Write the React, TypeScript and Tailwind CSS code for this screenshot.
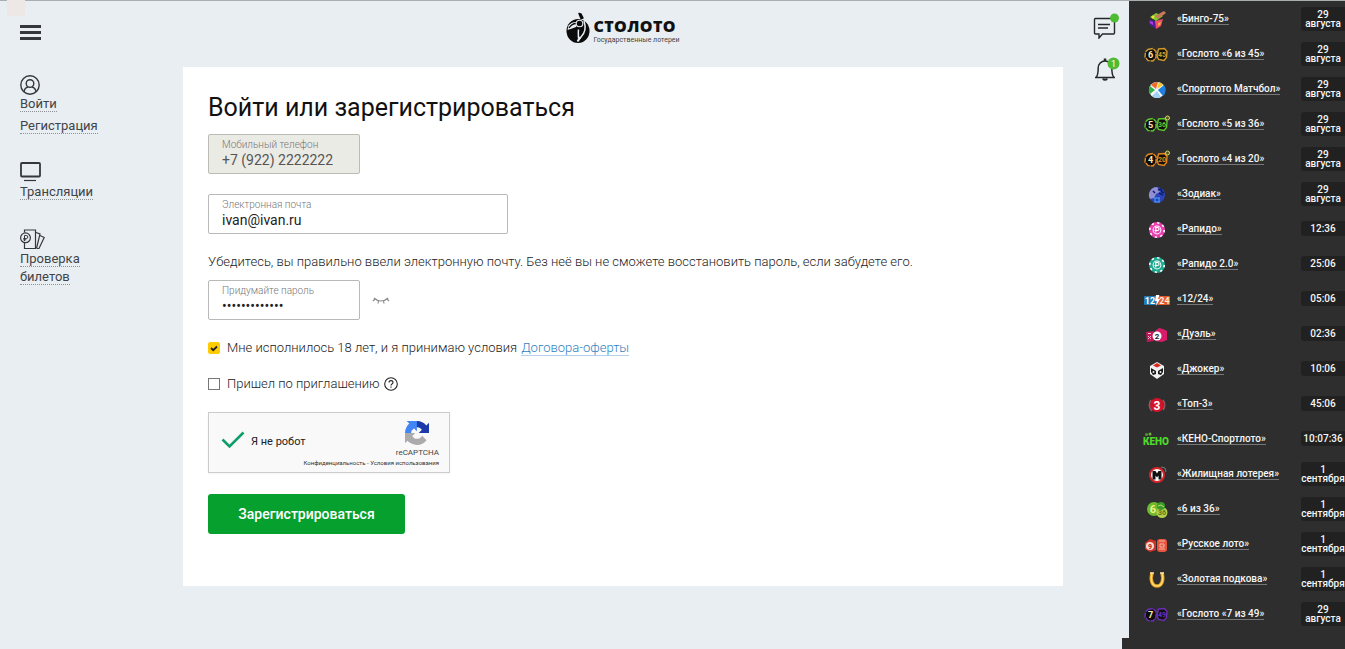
import { useState } from 'react'
import type { ReactNode } from 'react'

interface Game {
  name: string
  when: string[]
  icon: ReactNode
}

// Pair of numbered balls used by the "Гослото" family
function Pair({ a, b, color, plus }: { a: string; b: string; color: string; plus?: boolean }) {
  return (
    <>
      <path d="M5 7.500l5-1 3 3v6l-3 3.500-5-.5-3-3.500.5-5z" fill="#0c0c0c" stroke={color} strokeWidth="1.400" strokeDasharray="5 .8" />
      <path d="M15.500 7l6-.5 2.500 3-.5 6-2.500 3-5.500-1-1.500-4z" fill="#15110a" stroke={color} strokeWidth="1.400" />
      <text x="7.500" y="16" fontSize="9" fontWeight="700" fill="#ffe9a8" textAnchor="middle">{a}</text>
      <text x="19" y="15" fontSize="7" fontWeight="700" fill={color} textAnchor="middle">{b}</text>
      {plus && <circle cx="24.500" cy="6" r="2" fill="#55551c" stroke="#d9d978" />}
    </>
  )
}

function Chip({ color }: { color: string }) {
  return (
    <>
      <circle cx="14" cy="13" r="8" fill={color} />
      <circle cx="14" cy="13" r="7.200" fill="none" stroke="#fff" strokeWidth="1.600" strokeDasharray="2.2 3.45" />
      <circle cx="14" cy="13" r="4.400" fill="#fff" />
      <circle cx="14" cy="13" r="3.400" fill={color} />
      <path d="M12.800 15.500v-5h1.700a1.500 1.500 0 0 1 0 3h-3" fill="none" stroke="#fff" strokeWidth="1.200" />
    </>
  )
}

const AUG = ['29', 'августа']
const SEP = ['1', 'сентября']

const GAMES: Game[] = [
  {
    name: '«Бинго-75»', when: AUG,
    icon: (
      <>
        <path d="M6 12l7 3v7l-7-5z" fill="#4b1f9c" />
        <path d="M12 14l8-2-2 7-5 3z" fill="#ee4f68" />
        <path d="M7 10l6-4 7 3-7 5z" fill="#7fc92f" />
        <path d="M12 9l9-5 2 2-8 6z" fill="#c67c58" />
        <circle cx="10" cy="10" r="1.500" fill="#f5dd3c" />
        <path d="M15 16l3-1-1 3-2 1z" fill="#f9a447" />
        <path d="M7 14l3 1v3l-3-2z" fill="#b43be0" />
      </>
    ),
  },
  { name: '«Гослото «6 из 45»', when: AUG, icon: <Pair a="6" b="45" color="#d29a2b" /> },
  {
    name: '«Спортлото Матчбол»', when: AUG,
    icon: (
      <>
        <circle cx="14" cy="13" r="8" fill="#f5f5f5" />
        <path d="M13 12L8 8a8 8 0 0 1 7-3z" fill="#f06a2a" />
        <path d="M14 12l2-7a8 8 0 0 1 4 3z" fill="#f4c62c" />
        <path d="M15 13l6-5a8 8 0 0 1-1 11z" fill="#1e7fe0" />
        <path d="M12 13L7 9a8 8 0 0 0 0 8z" fill="#2fb04a" />
        <path d="M14 14l4 6a8 8 0 0 1-9-1z" fill="#9fd0f5" />
      </>
    ),
  },
  { name: '«Гослото «5 из 36»', when: AUG, icon: <Pair a="5" b="36" color="#5fc531" plus /> },
  { name: '«Гослото «4 из 20»', when: AUG, icon: <Pair a="4" b="20" color="#e8871c" plus /> },
  {
    name: '«Зодиак»', when: AUG,
    icon: (
      <>
        <circle cx="14" cy="13" r="8" fill="#2b45b8" />
        <path d="M14 5a8 8 0 0 0-7 12l4-1 2-4 4-2z" fill="#8f8fd2" />
        <path d="M15 8l3-1 1 3 2 1M10 9l2 2M16 11l4 2" stroke="#111b6b" strokeWidth="1.500" fill="none" />
        <path d="M11 16h6M12 16v4M16 16v4M11 20h6" stroke="#4da0f5" fill="none" />
      </>
    ),
  },
  { name: '«Рапидо»', when: ['12:36'], icon: <Chip color="#ea3fae" /> },
  { name: '«Рапидо 2.0»', when: ['25:06'], icon: <Chip color="#20a98f" /> },
  {
    name: '«12/24»', when: ['05:06'],
    icon: (
      <>
        <rect x="1" y="9" width="13" height="9" rx="1" fill="#237cb5" />
        <rect x="14" y="9" width="13" height="9" rx="1" fill="#e2592b" />
        <text x="7" y="16.500" fontSize="9" fontWeight="700" fill="#fff" textAnchor="middle">12</text>
        <text x="21.500" y="16.500" fontSize="9" fontWeight="700" fill="#ffe6dd" textAnchor="middle">24</text>
        <path d="M13 8h3.500l-1.500 4h2l-4 7 .8-5H12z" fill="#fff" />
      </>
    ),
  },
  {
    name: '«Дуэль»', when: ['02:36'],
    icon: (
      <>
        <path d="M3 10l8-1v10l-7 1z" fill="#c2185b" />
        <path d="M12 9l4-3 4 1 4 2v9l-5 2-7-1z" fill="#d91c68" />
        <path d="M5 14l3 3m0-3l-3 3M5 11.500h3" stroke="#ffb3d0" />
        <circle cx="14" cy="14" r="4.500" fill="#fff" />
        <text x="14" y="17" fontSize="8" fontWeight="700" fill="#222" textAnchor="middle">2</text>
      </>
    ),
  },
  {
    name: '«Джокер»', when: ['10:06'],
    icon: (
      <>
        <path d="M14 5l7 4v8l-7 5-7-5V9z" fill="#f1f1f1" />
        <path d="M10 8.500l4-2.500 4 2.500-4 2z" fill="#d8281f" />
        <path d="M8 11l5 3v3l-3 1-2-3zM20 11l-5 3v3l3 1 2-3z" fill="#181818" />
        <circle cx="10.500" cy="15" r="1" fill="#eee" />
        <circle cx="17.500" cy="15" r="1" fill="#eee" />
      </>
    ),
  },
  {
    name: '«Топ-3»', when: ['45:06'],
    icon: (
      <>
        <circle cx="14" cy="13" r="7" fill="#d5122c" />
        <path d="M8 8a8 8 0 0 0 1 11M20 18a8 8 0 0 0 0-10" stroke="#9a5a62" strokeWidth="1.500" fill="none" />
        <text x="14" y="17.500" fontSize="12" fontWeight="700" fill="#fff" textAnchor="middle">3</text>
      </>
    ),
  },
  {
    name: '«КЕНО-Спортлото»', when: ['10:07:36'],
    icon: (
      <>
        <text x="13" y="18" fontSize="10" fontWeight="900" fill="#4fd82b" textAnchor="middle">КЕНО</text>
        <circle cx="3.500" cy="7.500" r="1.500" fill="#4c9635" />
        <circle cx="7" cy="7" r="1.500" fill="#72b33d" />
      </>
    ),
  },
  {
    name: '«Жилищная лотерея»', when: SEP,
    icon: (
      <>
        <circle cx="14" cy="13" r="7" fill="#fff" stroke="#d5252b" strokeWidth="2" />
        <path d="M9.500 17.500V9h3l1.500 2.500L15.500 9h3v8.500h-3v-4L14 15.500l-1.500-2v4z" fill="#111" />
        <path d="M18 5l4 1 1 4" fill="none" stroke="#7a7a7a" />
      </>
    ),
  },
  {
    name: '«6 из 36»', when: SEP,
    icon: (
      <>
        <circle cx="11" cy="12" r="7" fill="#6fbb2d" />
        <circle cx="19" cy="15.500" r="5.500" fill="#b5cd4d" />
        <circle cx="18" cy="9" r="4" fill="#3c9a2c" />
        <text x="10" y="16" fontSize="11" fontWeight="700" fill="#f0f08a" textAnchor="middle">6</text>
        <path d="M15 9l3-1 3 2" fill="none" stroke="#b7e06a" />
        <text x="19" y="18" fontSize="7" fontWeight="700" fill="#5f7b16" textAnchor="middle">36</text>
      </>
    ),
  },
  {
    name: '«Русское лото»', when: SEP,
    icon: (
      <>
        <path d="M2 11l5-4 6 2v9l-6 2-5-3z" fill="#cf3325" />
        <rect x="14" y="7" width="10" height="13" rx="3" fill="#e8553f" />
        <circle cx="7" cy="14" r="4" fill="#f7d9d3" />
        <text x="7" y="17" fontSize="7" fontWeight="700" fill="#b32018" textAnchor="middle">9</text>
        <path d="M16 9h6M16 17h6M17 12h4v3h-4z" stroke="#f8b4a3" fill="none" />
      </>
    ),
  },
  {
    name: '«Золотая подкова»', when: SEP,
    icon: (
      <>
        <path d="M9 6c-2 7 0 13 5 13s7-6 5-13" fill="none" stroke="#e29a1f" strokeWidth="3.500" />
        <path d="M9 6c-2 7 0 13 5 13s7-6 5-13" fill="none" stroke="#ffdc6b" strokeWidth="1.500" />
        <path d="M7 6h4M17 6h4" stroke="#ffe9a0" strokeWidth="1.500" />
      </>
    ),
  },
  { name: '«Гослото «7 из 49»', when: AUG, icon: <Pair a="7" b="49" color="#6a2fb5" /> },
]

function Logo() {
  return (
    <a href="#" className="flex items-start gap-[3px] text-[#111]">
      <svg width="24" height="32" viewBox="0 0 24 32" aria-hidden="true">
        <ellipse cx="12" cy="19" rx="11.500" ry="12" fill="#0b0b0b" />
        <path d="M13 1.500l2 .5 2 4-2 .5z" fill="#0b0b0b" stroke="#0b0b0b" strokeWidth="1.500" strokeLinejoin="round" />
        <path d="M2.500 13.500C5 10.500 8.500 9.500 11 10l-1 5-4 1.500-4.500 1.500" fill="#e9eef2" />
        <path d="M3 16c2-3 4-4.500 7-4.500" fill="none" stroke="#0b0b0b" strokeWidth="1.300" />
        <circle cx="13.500" cy="11.500" r="3.300" fill="#0b0b0b" stroke="#e9eef2" strokeWidth="1.100" />
        <path d="M18 9c2 6 1 12-3 16l-3 3.500M12.500 17.500c-.5 4 0 6 0 9" fill="none" stroke="#e9eef2" strokeWidth="1.500" />
        <path d="M11.500 29.500l3-4.500" stroke="#e9eef2" strokeWidth="2" />
      </svg>
      <span className="flex flex-col gap-0.5 pt-1.5">
        <span className="font-['Open_Sans'] text-[16px] leading-4 font-extrabold tracking-wide">СТОЛОТО</span>
        <span className="text-[7px] leading-2 text-[#444]">Государственные лотереи</span>
      </span>
    </a>
  )
}

function NavLink({ children }: { children: ReactNode }) {
  return (
    <a href="#" className="text-[13px] leading-[18px] text-[#3f4449]">
      <span className="border-b border-dotted border-[#8d9296]">{children}</span>
    </a>
  )
}

function SideNav() {
  return (
    <nav className="w-[183px] shrink-0 pt-6 pl-5 text-[#34383c]">
      <button aria-label="Меню" className="flex w-[21px] flex-col gap-[3px]">
        <span className="h-[3px] w-full bg-[#34383c]" />
        <span className="h-[3px] w-full bg-[#34383c]" />
        <span className="h-[3px] w-full bg-[#34383c]" />
      </button>
      <div className="mt-[35px] flex flex-col items-start">
        <svg width="20" height="20" viewBox="0 0 20 20" fill="none" stroke="currentColor" strokeWidth="1.4" aria-hidden="true">
          <circle cx="10" cy="10" r="9.200" />
          <circle cx="10" cy="8.500" r="3.800" />
          <path d="M4 17c.3-3 2-4.500 4-5M16 17c-.3-3-2-4.500-4-5" />
        </svg>
        <NavLink>Войти</NavLink>
        <div className="mt-1 flex"><NavLink>Регистрация</NavLink></div>
      </div>
      <div className="mt-[27px] flex flex-col items-start gap-px">
        <svg width="21" height="20" viewBox="0 0 21 20" fill="none" stroke="currentColor" strokeWidth="1.800" aria-hidden="true">
          <rect x="1" y="1" width="19" height="13.500" rx="1" />
          <path d="M4 18.500h12" strokeWidth="1.200" />
        </svg>
        <NavLink>Трансляции</NavLink>
      </div>
      <div className="mt-7 flex w-20 flex-col items-start">
        <svg width="25" height="21" viewBox="0 0 25 21" fill="none" stroke="currentColor" strokeWidth="1.200" aria-hidden="true">
          <path d="M4.500 3.500V1h11v18.500h-11V14" />
          <path d="M16 3.500l4 1.500-3.500 14.500M20 6.500l4.200 2L19 19.500h-2" />
          <circle cx="5.500" cy="8.800" r="4.900" />
          <path d="M4.500 12V6.500h1.800a1.500 1.500 0 0 1 0 3H3.300M3.300 10.800h3" strokeWidth="1" />
        </svg>
        <NavLink>Проверка билетов</NavLink>
      </div>
    </nav>
  )
}

function RecaptchaLogo() {
  return (
    <svg width="24" height="24" viewBox="0 0 64 64" aria-hidden="true">
      <path d="M64 31.955l-.033-1.370V4.687l-7.160 7.160C50.948 4.674 42.033.093 32.050.093c-10.400 0-19.622 4.960-25.458 12.640l11.736 11.860a15.550 15.550 0 0 1 4.754-5.334c2.050-1.600 4.952-2.906 8.968-2.906.485 0 .860.057 1.135.163 4.976.393 9.288 3.140 11.828 7.124l-8.307 8.307L64 31.953" fill="#1c3aa9" />
      <path d="M31.862.094l-1.370.033H4.594l7.160 7.160C4.580 13.147 0 22.060 0 32.046c0 10.400 4.960 19.622 12.640 25.458L24.500 45.768a15.550 15.550 0 0 1-5.334-4.754c-1.600-2.050-2.906-4.952-2.906-8.968 0-.485.057-.860.163-1.135.393-4.976 3.140-9.288 7.124-11.828l8.307 8.307L31.860.095" fill="#4285f4" />
      <path d="M.001 32.045l.033 1.370v25.898l7.160-7.160c5.860 7.173 14.774 11.754 24.760 11.754 10.400 0 19.622-4.960 25.458-12.640l-11.736-11.860a15.550 15.550 0 0 1-4.754 5.334c-2.050 1.600-4.952 2.906-8.968 2.906-.485 0-.860-.057-1.135-.163-4.976-.393-9.288-3.140-11.828-7.124l8.307-8.307c-10.522.040-22.400.066-27.295-.005" fill="#ababab" />
    </svg>
  )
}

interface FieldProps {
  id: string
  label: string
  type: string
  value: string
  onChange?: (v: string) => void
  disabled?: boolean
}

function Field({ id, label, type, value, onChange, disabled }: FieldProps) {
  return (
    <div className={`flex h-10 flex-col rounded-[2px] border px-[13px] pt-1 ${disabled ? 'border-[#bcbcb4] bg-[#ebebe6]' : 'border-[#b9b9b9] bg-white'}`}>
      <label htmlFor={id} className="text-[10px] leading-3 font-light text-[#777]">{label}</label>
      <input
        id={id}
        type={type}
        value={value}
        disabled={disabled}
        onChange={e => onChange?.(e.target.value)}
        className="h-[18px] w-full bg-transparent text-[14px] leading-[18px] font-normal text-[#222] outline-none disabled:text-[#555]"
      />
    </div>
  )
}

function RegisterForm() {
  const [email, setEmail] = useState('ivan@ivan.ru')
  const [password, setPassword] = useState('ivanivan12345')
  const [adult, setAdult] = useState(true)
  const [invited, setInvited] = useState(false)

  return (
    <form className="bg-white px-[25px] pt-6 pb-[52px] text-[13px] font-light text-[#222]" onSubmit={e => e.preventDefault()}>
      <h1 className="text-[25px] leading-[34px] font-normal text-[#111]">Войти или зарегистрироваться</h1>
      <div className="mt-[9px] w-[152px]">
        <Field id="phone" label="Мобильный телефон" type="tel" value="+7 (922) 2222222" disabled />
      </div>
      <div className="mt-5 w-[300px]">
        <Field id="email" label="Электронная почта" type="email" value={email} onChange={setEmail} />
      </div>
      <p className="mt-[19px] leading-[18px]">
        Убедитесь, вы правильно ввели электронную почту. Без неё вы не сможете восстановить пароль, если забудете его.
      </p>
      <div className="mt-[9px] flex items-center gap-3">
        <div className="w-[152px]">
          <Field id="password" label="Придумайте пароль" type="password" value={password} onChange={setPassword} />
        </div>
        <button type="button" aria-label="Показать пароль">
          <svg width="18" height="10" viewBox="0 0 18 10" fill="none" stroke="#8b8b8b" strokeWidth="1.200">
            <path d="M2 3c4 4 10 4 14 0M3 4L1 6M6.500 6L6 8.500M11.500 6l.5 2.500M15 4l2 2" />
          </svg>
        </button>
      </div>
      <div className="mt-[19px] flex h-[18px] items-center">
        <label className="flex items-center gap-[7px]">
          <span className="relative flex">
            <input
              type="checkbox"
              checked={adult}
              onChange={e => setAdult(e.target.checked)}
              className="size-3 appearance-none rounded-[2px] border border-[#888] checked:border-[#fc0] checked:bg-[#fc0]"
            />
            {adult && (
              <svg className="pointer-events-none absolute inset-0" width="12" height="12" viewBox="0 0 12 12" fill="none" stroke="#222" strokeWidth="1.800">
                <path d="M3 6l2.200 2.200L9 4.500" />
              </svg>
            )}
          </span>
          Мне исполнилось 18 лет, и я принимаю условия
        </label>
        <a href="#" className="ml-1 border-b border-[#b5d0e8] leading-[15px] text-[#2f7fc1]">Договора-оферты</a>
      </div>
      <div className="mt-[18px] flex h-[18px] items-center gap-1">
        <label className="flex items-center gap-[7px]">
          <input
            type="checkbox"
            checked={invited}
            onChange={e => setInvited(e.target.checked)}
            className="size-3 appearance-none border border-[#777] checked:bg-[#fc0]"
          />
          Пришел по приглашению
        </label>
        <button type="button" aria-label="Подсказка">
          <svg width="14" height="14" viewBox="0 0 14 14" fill="none" stroke="#222" strokeWidth="1.100">
            <circle cx="7" cy="7" r="6.300" />
            <path d="M5 5.600c0-2.700 4-2.600 4-.2 0 1.300-2 1.600-2 3.100M7 9.600v1.200" />
          </svg>
        </button>
      </div>

      <div className="mt-[19px] flex h-[61px] w-[242px] flex-col border border-[#ccc] bg-[#f9f9f9] pr-2.5 pl-3 font-normal shadow-xs">
        <div className="flex h-[46px] justify-between">
          <div className="flex items-center gap-1.5 pt-3 text-[11px]">
            <svg width="24" height="18" viewBox="0 0 24 18" className="mb-1" fill="none" stroke="#0f9d6a" strokeWidth="2.600" aria-hidden="true">
              <path d="M1.500 8.500l7 7L22.500 1.500" />
            </svg>
            Я не робот
          </div>
          <div className="flex flex-col items-center pt-2 text-[8px] leading-2 text-[#444]">
            <RecaptchaLogo />
            <span className="mt-1">reCAPTCHA</span>
          </div>
        </div>
        <div className="self-end text-[6px] leading-2 text-[#333]">
          <a href="#">Конфиденциальность</a> - <a href="#">Условия использования</a>
        </div>
      </div>

      <button type="submit" className="mt-[21px] h-10 w-[197px] rounded-[3px] bg-[#05a02d] text-[14px] font-medium text-white">
        Зарегистрироваться
      </button>
    </form>
  )
}

function Notifications() {
  return (
    <div className="flex w-[66px] shrink-0 flex-col items-center gap-[18px] pt-3 pl-5">
      <button aria-label="Сообщения">
        <svg width="28" height="26" viewBox="0 0 28 26" fill="none" stroke="#24282b" strokeWidth="1.400">
          <path d="M3 5.500h18.500q1 0 1 1V20q0 1-1 1H10.500L7 25v-4H3.500q-1 0-1-1V6.500q0-1 1-1z" />
          <path d="M6 11.500h12M6 15h10" />
          <circle cx="22.500" cy="5" r="4.500" fill="#4fbb35" stroke="none" />
        </svg>
      </button>
      <button aria-label="Уведомления">
        <svg width="28" height="24" viewBox="0 0 28 24" fill="none" stroke="#24282b" strokeWidth="1.500">
          <path d="M3 20.500h20M4 20.500c2-2 2.200-4 2.200-9.500 0-4 3-7 6.800-7s6.800 3 6.800 7c0 5.500.2 7.500 2.200 9.500" />
          <path d="M11 21.500c0 2 4 2 4 0" fill="#24282b" />
          <path d="M13 1.500v2.500" strokeWidth="2.500" />
          <circle cx="21.500" cy="6.500" r="6" fill="#4fbb35" stroke="none" />
          <text x="21.500" y="10" fontSize="9" fill="#fff" stroke="none" textAnchor="middle">1</text>
        </svg>
      </button>
    </div>
  )
}

function Draws() {
  return (
    <aside className="relative w-[216px] shrink-0 bg-[#2e2e2e]">
      <ul>
        {GAMES.map(g => (
          <li key={g.name} className="flex h-[35px] items-center pl-[14px] text-[10px] font-medium text-[#f6f6f6]">
            <svg width="28" height="26" viewBox="0 0 28 26" className="mt-0.5 shrink-0" aria-hidden="true">{g.icon}</svg>
            <a href="#" className="ml-1.5 min-w-0 flex-1 whitespace-nowrap">
              <span className="border-b border-[#777]">{g.name}</span>
            </a>
            <time className="flex w-11 shrink-0 flex-col items-center rounded-l-[3px] bg-[#212121] py-[3px] leading-[9px]">
              {g.when.map(w => <span key={w}>{w}</span>)}
            </time>
          </li>
        ))}
      </ul>
      <span className="absolute bottom-0 -left-[7px] h-[11px] w-[7px] bg-[#2e2e2e]" />
    </aside>
  )
}

export default function App() {
  return (
    <div className="relative flex min-h-screen border-t border-[#a9aeb1] bg-[#e9eef2] font-['Roboto','Liberation_Sans',sans-serif]">
      <span className="absolute -top-px left-[7px] h-4 w-[18px] bg-[#ede8e5]" />
      <SideNav />
      <main className="min-w-0 flex-1">
        <header className="flex h-[66px] justify-center pt-[11px]">
          <div><Logo /></div>
        </header>
        <RegisterForm />
      </main>
      <Notifications />
      <Draws />
    </div>
  )
}
